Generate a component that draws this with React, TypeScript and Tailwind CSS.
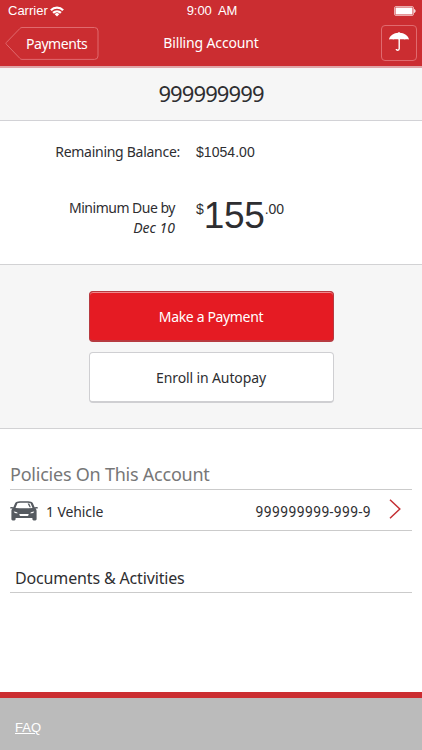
import { type ReactNode } from "react";

function WifiIcon() {
  return (
    <svg width="14" height="11" viewBox="0 0 14 11" fill="none" stroke="#fff" strokeWidth="2.3">
      <path d="M0.9 4.200a8.700 8.700 0 0 1 12.200 0" />
      <path d="M3.100 6.900a5.600 5.600 0 0 1 7.800 0" />
      <path d="M7 10.600 4.700 8.300a3.200 3.200 0 0 1 4.600 0z" fill="#fff" stroke="none" />
    </svg>
  );
}

function BatteryIcon() {
  return (
    <svg width="22" height="10" viewBox="0 0 22 10" fill="none">
      <rect x="0.5" y="0.5" width="19" height="9" rx="1.5" stroke="#fff" strokeOpacity="0.6" />
      <rect x="1.5" y="1.5" width="17" height="7" rx="0.5" fill="#fff" />
      <path d="M20.2 3v4c.8-.2 1.3-1 1.3-2s-.5-1.8-1.3-2z" fill="#fff" />
    </svg>
  );
}

function UmbrellaIcon() {
  return (
    <svg width="20" height="20" viewBox="0 0 20 20" fill="none">
      <path
        d="M0 7.500C.7 3.500 4.800 1 9.400.8V0h1.200v.8C15.200 1 19.300 3.500 20 7.500c-1.300-.4-2.900-.4-4.200 0-1.700-.4-3.900-.4-5.800 0-1.900-.4-4.100-.4-5.800 0C2.900 7.100 1.300 7.100 0 7.500z"
        fill="#fff"
      />
      <path d="M10.200 7v9.800c0 1.900-2.900 1.900-2.900.1" stroke="#fff" strokeWidth="1.400" />
    </svg>
  );
}

function CarIcon() {
  return (
    <svg width="28" height="20" viewBox="0 0 28 20" fill="#555a60">
      <path
        fillRule="evenodd"
        d="M7 .7C9.500.2 18.500.2 21 .7c.9.2 1.500.7 1.900 1.600l1.700 3.900 2-.3c.8-.1 1.300.3 1.300.8 0 .6-.4.900-1.200.9h-1.200c.8.700 1.100 1.500 1.100 2.700v7.700c0 .9-.5 1.400-1.300 1.400h-1.600c-.8 0-1.300-.5-1.300-1.400v-.9H5.600V18c0 .9-.5 1.400-1.300 1.400H2.700c-.8 0-1.300-.5-1.300-1.400v-7.700c0-1.200.3-2 1.100-2.700H1.300C.5 7.600.1 7.300.1 6.700c0-.5.5-.9 1.300-.8l2 .3 1.700-3.900C5.500 1.400 6.100.900 7 .7zM7.400 2.200 5.500 6.900c5 .5 12 .5 17 0l-1.900-4.700c-3-.6-10.200-.6-13.200 0zM3.800 10.500c0 1.300 1.700 2 4.100 1.800-.8-1.100-2.200-1.700-4.100-1.800zM24.200 10.500c0 1.300-1.700 2-4.100 1.800.8-1.100 2.200-1.700 4.100-1.800zM9.300 13l.4 1.500c.1.300.3.500.6.500h7.400c.3 0 .5-.2.600-.5l.4-1.500z"
      />
      <path d="M17.600 2.500h1.700l1.500 3.700h-1.200z" />
    </svg>
  );
}

function BackButton({ children }: { children: ReactNode }) {
  return (
    <button className="relative h-[34px] w-[94px] pl-[21px] text-left text-[14px] leading-[34px]">
      <svg className="absolute left-0 top-0" width="94" height="34" viewBox="0 0 94 34" fill="none">
        <path
          d="M17 1.500h72.500a3.500 3.500 0 0 1 3.500 3.500v24.900a3.500 3.500 0 0 1-3.500 3.500H17c-1 0-1.500-.3-2.200-1.100L1.300 18.200c-.5-.6-.5-1.100 0-1.700L14.800 2.600C15.500 1.800 16 1.500 17 1.500z"
          stroke="#e06a6e"
        />
      </svg>
      <span className="relative top-px tracking-[-0.45px]">{children}</span>
    </button>
  );
}

function Header() {
  return (
    <header className="h-[68px] border-b-2 border-[#dfa5a8] bg-[#cb2d31] text-white">
      <div className="grid h-[22px] grid-cols-3 items-center pl-2 pr-[6px] font-['Liberation_Sans',sans-serif] text-[13px]">
        <div className="flex items-center gap-[2px]">
          <span>Carrier</span>
          <WifiIcon />
        </div>
        <span className="whitespace-pre text-center tracking-[-0.1px]">9:00  AM</span>
        <div className="flex justify-end">
          <BatteryIcon />
        </div>
      </div>
      <div className="grid grid-cols-[1fr_auto_1fr] items-center pl-[5px] pr-[5px] pt-[3px]">
        <div className="flex">
          <BackButton>Payments</BackButton>
        </div>
        <h1 className="text-[14px] leading-[34px] tracking-[-0.15px]">Billing Account</h1>
        <div className="flex justify-end">
          <button className="flex size-9 justify-center rounded-[4px] border border-[#e06a6e] pt-[6px]">
            <UmbrellaIcon />
          </button>
        </div>
      </div>
    </header>
  );
}

function BalanceSummary() {
  return (
    <section className="h-[143px] pt-[21px] text-[14px] leading-5">
      <div className="flex">
        <span className="w-[180px] text-right tracking-[-0.28px]">Remaining Balance:</span>
        <span className="ml-4 font-['Liberation_Sans',sans-serif] tracking-[0.05px]">$1054.00</span>
      </div>
      <div className="mt-9 flex">
        <div className="w-[175px] text-right">
          <div className="tracking-[-0.5px]">Minimum Due by</div>
          <div className="italic">Dec 10</div>
        </div>
        <div className="ml-[21px] flex pt-px font-['Liberation_Sans',sans-serif]">
          <span>$</span>
          <span className="text-[37px] leading-[34px] tracking-[-0.3px]">155</span>
          <span>.00</span>
        </div>
      </div>
    </section>
  );
}

function Actions() {
  return (
    <section className="flex h-[165px] flex-col items-center gap-[10px] border-y border-[#d2d2d4] bg-[#f6f6f6] pt-[26px] text-[14px]">
      <button className="h-[51px] w-[245px] rounded-[4px] border border-b-2 border-[#b73a40] bg-[#e51b23] tracking-[-0.35px] text-white shadow-[inset_0_1px_0_#ef8a8e]">
        Make a Payment
      </button>
      <button className="h-[51px] w-[245px] rounded-[4px] border border-b-2 border-[#cfcfd2] bg-white tracking-[-0.12px]">
        Enroll in Autopay
      </button>
    </section>
  );
}

function Policies() {
  return (
    <section className="mx-[10px] pt-[32px]">
      <h2 className="h-[29px] border-b border-[#cbcbcb] text-[18px] leading-[27px] tracking-[-0.23px] text-[#777]">
        Policies On This Account
      </h2>
      <div className="flex h-[41px] items-center border-b border-[#cbcbcb]">
        <div className="pt-px">
          <CarIcon />
        </div>
        <span className="ml-2 pt-[2px] text-[14px] tracking-[-0.1px]">1 Vehicle</span>
        <span className="ml-auto pt-[4px] font-[Roboto,sans-serif] text-[14px] tracking-[0.36px]">999999999-999-9</span>
        <svg className="mb-[3px] ml-[18px] mr-[11px]" width="12" height="20" viewBox="0 0 12 20" fill="none">
          <path d="M1 .8 10.800 10 1 19.200" stroke="#c42f34" strokeWidth="1.500" />
        </svg>
      </div>
      <h2 className="mt-[33px] h-[29px] border-b border-[#cbcbcb] pl-[5px] text-[16px] leading-7 tracking-[-0.15px]">
        Documents &amp; Activities
      </h2>
    </section>
  );
}

export default function App() {
  return (
    <div className="flex h-[750px] w-[422px] flex-col bg-white font-['Noto_Sans',sans-serif] text-[#2e2e31]">
      <Header />
      <div className="h-[53px] border-b border-[#d2d2d6] bg-[#f6f6f6] text-center text-[22px] leading-[51px] tracking-[-0.9px]">
        999999999
      </div>
      <BalanceSummary />
      <Actions />
      <Policies />
      <footer className="mt-auto h-[58px] border-t-[6px] border-[#cb2d31] bg-[#bbb] pl-[15px] pt-[20px] font-['Liberation_Sans',sans-serif] text-[13px] leading-5 text-white">
        <a href="#" className="underline">
          FAQ
        </a>
      </footer>
    </div>
  );
}
